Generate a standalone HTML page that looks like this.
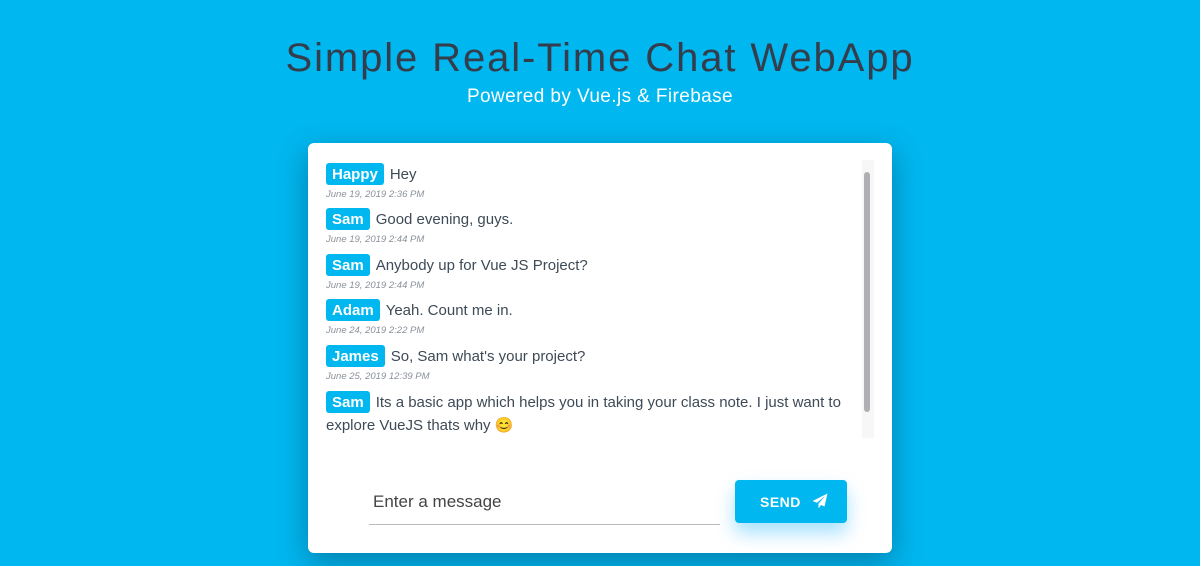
<!DOCTYPE html>
<html><head><meta charset="utf-8"><style>
*{margin:0;padding:0;box-sizing:border-box}
body{width:1200px;height:566px;background:#00b7ef;font-family:"Liberation Sans",sans-serif;position:relative;overflow:hidden}
h1{position:absolute;left:0;right:0;top:36px;text-align:center;font-weight:normal;font-size:40px;letter-spacing:1.9px;color:#333d4b}
h2{position:absolute;left:0;right:0;top:86px;text-align:center;font-weight:normal;font-size:19px;letter-spacing:0.4px;color:#fff}
.card{position:absolute;left:308px;top:143px;width:584px;height:410px;background:#fff;border-radius:6px;box-shadow:0 10px 30px rgba(0,60,90,.45)}
.msgs{position:absolute;left:18px;top:20px;width:520px}
.m{position:absolute;left:0;font-size:15px;color:#3e4a56;line-height:22px}
.b{display:inline-block;background:#00b7ef;color:#fff;font-weight:bold;font-size:15px;padding:0 6px;border-radius:3px;margin-right:6px;height:22px;line-height:23px}
.t{font-size:9.5px;font-style:italic;color:#8a9199;line-height:11px;display:block;margin-top:3px}
.track{position:absolute;left:554px;top:17px;width:12px;height:278px;background:#f7f7f7}
.thumb{position:absolute;left:556px;top:29px;width:6px;height:240px;background:#b0b0b4;border-radius:3px}
.inp{position:absolute;left:61px;top:338px;width:351px;height:44px;border-bottom:1px solid #bbb;font-size:17px;color:#444;padding:11px 4px}
.btn{position:absolute;left:427px;top:337px;width:112px;height:43px;background:#00b7ef;border-radius:4px;color:#fff;font-weight:bold;font-size:14px;letter-spacing:.5px;line-height:45px;padding-left:25px;box-shadow:0 10px 18px rgba(0,170,255,.35)}
</style></head><body>
<h1>Simple Real-Time Chat WebApp</h1>
<h2>Powered by Vue.js &amp; Firebase</h2>
<div class="card">
<div class="msgs">
<div class="m" style="top:0"><span class="b">Happy</span>Hey<span class="t">June 19, 2019 2:36 PM</span></div>
<div class="m" style="top:45px"><span class="b">Sam</span>Good evening, guys.<span class="t">June 19, 2019 2:44 PM</span></div>
<div class="m" style="top:91px"><span class="b">Sam</span>Anybody up for Vue JS Project?<span class="t">June 19, 2019 2:44 PM</span></div>
<div class="m" style="top:136px"><span class="b">Adam</span>Yeah. Count me in.<span class="t">June 24, 2019 2:22 PM</span></div>
<div class="m" style="top:182px"><span class="b">James</span>So, Sam what's your project?<span class="t">June 25, 2019 12:39 PM</span></div>
<div class="m" style="top:228px;width:520px;line-height:23px"><span class="b">Sam</span>Its a basic app which helps you in taking your class note. I just want to explore VueJS thats why 😊</div>
</div>
<div class="track"></div><div class="thumb"></div>
<div class="inp">Enter a message</div>
<div class="btn">SEND <svg width="16" height="16" viewBox="0 0 16 16" style="vertical-align:-2px;margin-left:7px"><path d="M15.5 0.5 L0.5 8 L5 9.8 L13 3 L6.5 10.8 L6.5 15.5 L9 12 L12.5 13.5 Z" fill="#fff"/></svg></div>
</div>
</body></html>
